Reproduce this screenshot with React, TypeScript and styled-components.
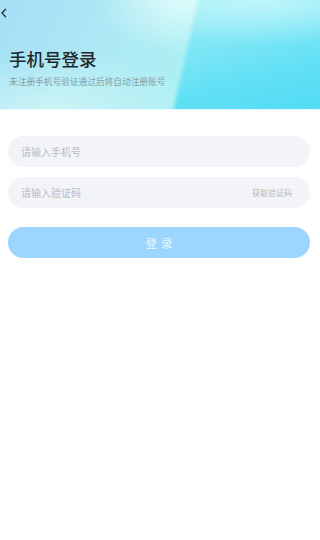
import styled, { createGlobalStyle } from "styled-components";

const GlobalStyle = createGlobalStyle`
  html, body {
    margin: 0;
    padding: 0;
    background: #ffffff;
  }
  body {
    font-family: "Noto Sans CJK SC", "Noto Sans", sans-serif;
  }
  * {
    box-sizing: border-box;
  }
`;

const Page = styled.div`
  width: 320px;
  min-height: 540px;
  background: #ffffff;
`;

// header background with the soft diagonal panel on the right
const Header = styled.header`
  position: relative;
  height: 110px;
  padding: 5px 0 0 0;
  overflow: hidden;
  background:
    radial-gradient(ellipse 90px 55px at 185px 0px, rgba(225, 252, 251, 0.95), rgba(225, 252, 251, 0) 100%),
    radial-gradient(ellipse 150px 60px at 50px 112px, rgba(205, 246, 246, 0.95), rgba(205, 246, 246, 0) 100%),
    linear-gradient(115deg, #a4dff6 0%, #ade9f4 35%, #acf0f2 60%, #a6eef2 100%);
  border-bottom: 1px solid #e8fcfd;

  &::before {
    content: "";
    position: absolute;
    inset: 0;
    -webkit-mask-image: linear-gradient(102.8deg, transparent 56.6%, #000 58.4%);
    mask-image: linear-gradient(102.8deg, transparent 56.6%, #000 58.4%);
    background:
      radial-gradient(ellipse 160px 45px at 260px 0px, rgba(200, 248, 250, 0.85), rgba(200, 248, 250, 0) 100%),
      linear-gradient(165deg, #b8f3f7 0%, #8ee9f6 40%, #62e0f5 75%, #52dcf4 100%);
  }
`;

const HeaderInner = styled.div`
  position: relative;
  z-index: 1;
`;

const BackButton = styled.button`
  display: block;
  width: 10px;
  height: 16px;
  padding: 0;
  border: none;
  background: transparent;
  cursor: pointer;
`;

const Title = styled.h1`
  margin: 26px 0 0 9px;
  font-size: 17.5px;
  line-height: 24px;
  font-weight: 500;
  color: #23282b;
`;

const Subtitle = styled.p`
  margin: 5px 0 0 9px;
  font-size: 8.7px;
  line-height: 12px;
  color: #86a0a6;
`;

const Form = styled.div`
  display: flex;
  flex-direction: column;
  padding: 26px 10px 0 8px;
`;

const Field = styled.div<{ $gap?: number }>`
  display: flex;
  align-items: center;
  height: 31px;
  margin-top: ${(p) => p.$gap ?? 0}px;
  padding: 0 18px 0 13px;
  border-radius: 16px;
  background: #f3f4f8;
`;

const Input = styled.input`
  flex: 1;
  min-width: 0;
  border: none;
  outline: none;
  background: transparent;
  padding: 0;
  font-family: inherit;
  font-size: 10px;
  color: #333;

  &::placeholder {
    color: #b9bcc4;
  }
`;

const CodeLink = styled.span`
  font-size: 8px;
  color: #b5b8bf;
  white-space: nowrap;
`;

const Submit = styled.button`
  height: 31px;
  margin-top: 19px;
  border: none;
  border-radius: 16px;
  background: #9cd5ff;
  color: #e9f5ff;
  font-family: inherit;
  font-size: 11.5px;
  letter-spacing: 4px;
  text-indent: 4px;
  cursor: pointer;
`;

export default function App() {
  return (
    <Page>
      <GlobalStyle />
      <Header>
        <HeaderInner>
          <BackButton aria-label="返回">
            <svg width="8" height="10" viewBox="0 0 8 10" fill="none">
              <path d="M4.6 1.2 L1 5 L4.6 8.8" stroke="#2a2f33" strokeWidth="1.3" strokeLinecap="round" strokeLinejoin="round" />
            </svg>
          </BackButton>
          <Title>手机号登录</Title>
          <Subtitle>未注册手机号验证通过后将自动注册账号</Subtitle>
        </HeaderInner>
      </Header>
      <Form>
        <Field>
          <Input placeholder="请输入手机号" />
        </Field>
        <Field $gap={10}>
          <Input placeholder="请输入验证码" />
          <CodeLink>获取验证码</CodeLink>
        </Field>
        <Submit>登录</Submit>
      </Form>
    </Page>
  );
}
